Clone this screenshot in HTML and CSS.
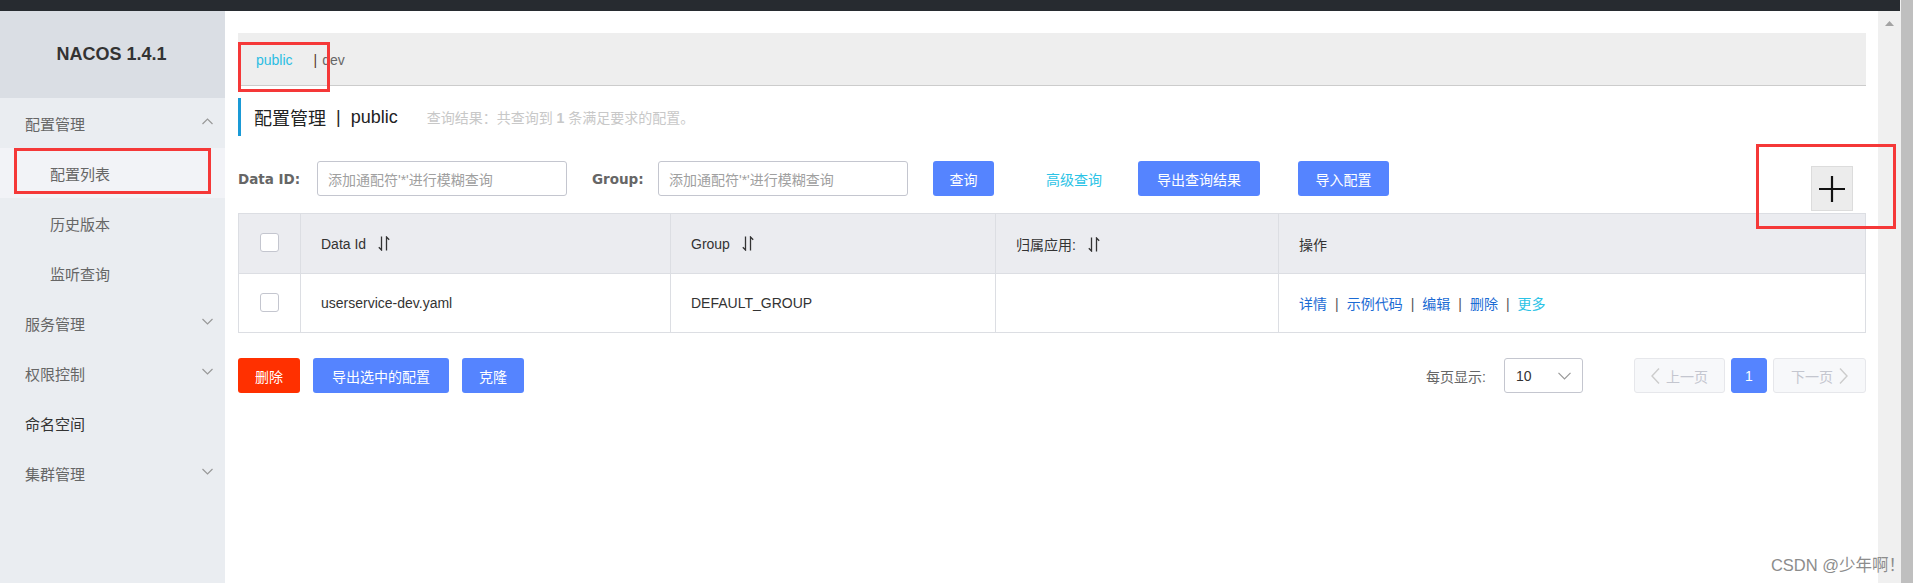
FILE: index.html
```html
<!DOCTYPE html>
<html lang="zh-CN">
<head>
<meta charset="utf-8">
<title>Nacos 配置列表</title>
<link rel="stylesheet" href="styles.css">
</head>
<body>
<div class="screen">
  <div class="window">
    <div class="topbar"></div>
    <div class="app">
      <aside class="sidebar">
        <div class="logo">NACOS 1.4.1</div>
        <nav class="menu">
          <div class="menu-item">
            <span>配置管理</span>
            <svg class="chev" width="11" height="7" viewBox="0 0 11 7"><polyline points="0.5,6 5.5,1 10.5,6" fill="none" stroke="#999" stroke-width="1.2"/></svg>
          </div>
          <div class="sub-item active">配置列表</div>
          <div class="sub-item">历史版本</div>
          <div class="sub-item">监听查询</div>
          <div class="menu-item">
            <span>服务管理</span>
            <svg class="chev" width="11" height="7" viewBox="0 0 11 7"><polyline points="0.5,1 5.5,6 10.5,1" fill="none" stroke="#999" stroke-width="1.2"/></svg>
          </div>
          <div class="menu-item">
            <span>权限控制</span>
            <svg class="chev" width="11" height="7" viewBox="0 0 11 7"><polyline points="0.5,1 5.5,6 10.5,1" fill="none" stroke="#999" stroke-width="1.2"/></svg>
          </div>
          <div class="menu-item leaf"><span>命名空间</span></div>
          <div class="menu-item">
            <span>集群管理</span>
            <svg class="chev" width="11" height="7" viewBox="0 0 11 7"><polyline points="0.5,1 5.5,6 10.5,1" fill="none" stroke="#999" stroke-width="1.2"/></svg>
          </div>
        </nav>
      </aside>

      <main class="content">
        <div class="ns-bar">
          <span class="ns-active">public</span><span class="ns-sep">|</span><span class="ns-item">dev</span>
        </div>

        <div class="page-title">
          <span class="title-main">配置管理</span><span class="title-sep">|</span><span class="title-ns">public</span>
          <span class="title-desc">查询结果：共查询到 <b>1</b> 条满足要求的配置。</span>
        </div>

        <div class="search-row">
          <label class="field-label">Data ID:</label>
          <div class="input">添加通配符'*'进行模糊查询</div>
          <label class="field-label group-label">Group:</label>
          <div class="input">添加通配符'*'进行模糊查询</div>
          <button class="btn btn-primary btn-query">查询</button>
          <button class="btn btn-text">高级查询</button>
          <button class="btn btn-primary btn-export">导出查询结果</button>
          <button class="btn btn-primary btn-import">导入配置</button>
          <button class="btn-add" aria-label="新建配置">
            <svg width="26" height="26" viewBox="0 0 26 26"><path d="M13 0 V26 M0 13 H26" stroke="#111" stroke-width="2.2" fill="none"/></svg>
          </button>
        </div>

        <table class="grid">
          <colgroup>
            <col class="c-check"><col class="c-id"><col class="c-group"><col class="c-app"><col class="c-op">
          </colgroup>
          <thead>
            <tr>
              <th class="cell-check"><span class="checkbox"></span></th>
              <th>Data Id <svg class="sort" width="12" height="15" viewBox="0 0 12 15"><path d="M3.5 0.5 V14 L0.8 11.2 M8.5 14.5 V1 L11.2 3.8" fill="none" stroke="#333" stroke-width="1.3"/></svg></th>
              <th>Group <svg class="sort" width="12" height="15" viewBox="0 0 12 15"><path d="M3.5 0.5 V14 L0.8 11.2 M8.5 14.5 V1 L11.2 3.8" fill="none" stroke="#333" stroke-width="1.3"/></svg></th>
              <th>归属应用: <svg class="sort" width="12" height="15" viewBox="0 0 12 15"><path d="M3.5 0.5 V14 L0.8 11.2 M8.5 14.5 V1 L11.2 3.8" fill="none" stroke="#333" stroke-width="1.3"/></svg></th>
              <th>操作</th>
            </tr>
          </thead>
          <tbody>
            <tr>
              <td class="cell-check"><span class="checkbox"></span></td>
              <td>userservice-dev.yaml</td>
              <td>DEFAULT_GROUP</td>
              <td></td>
              <td class="ops"><a>详情</a><span class="op-sep">|</span><a>示例代码</a><span class="op-sep">|</span><a>编辑</a><span class="op-sep">|</span><a>删除</a><span class="op-sep">|</span><a class="more">更多</a></td>
            </tr>
          </tbody>
        </table>

        <div class="footer-row">
          <div class="batch">
            <button class="btn btn-danger">删除</button>
            <button class="btn btn-primary btn-export-sel">导出选中的配置</button>
            <button class="btn btn-primary">克隆</button>
          </div>
          <div class="pager">
            <span class="page-size-label">每页显示:</span>
            <div class="select">
              <span>10</span>
              <svg width="13" height="8" viewBox="0 0 13 8"><polyline points="0.5,0.8 6.5,7 12.5,0.8" fill="none" stroke="#999" stroke-width="1.2"/></svg>
            </div>
            <div class="pages">
              <button class="pg pg-prev">
                <svg width="9" height="16" viewBox="0 0 9 16"><polyline points="8,0.5 1,8 8,15.5" fill="none" stroke="#ccc" stroke-width="1.4"/></svg>
                <span>上一页</span>
              </button>
              <button class="pg pg-current">1</button>
              <button class="pg pg-next">
                <span>下一页</span>
                <svg width="9" height="16" viewBox="0 0 9 16"><polyline points="1,0.5 8,8 1,15.5" fill="none" stroke="#ccc" stroke-width="1.4"/></svg>
              </button>
            </div>
          </div>
        </div>
      </main>

      <div class="vscroll">
        <svg class="vscroll-up" width="9" height="5" viewBox="0 0 9 5"><polygon points="4.5,0 9,5 0,5" fill="#a3a3a3"/></svg>
      </div>
    </div>
  </div>
  <div class="outer-scroll"></div>

  <div class="mark mark-ns"></div>
  <div class="mark mark-menu"></div>
  <div class="mark mark-add"></div>
  <div class="watermark">CSDN @少年啊！</div>
</div>
</body>
</html>
```

FILE: styles.css
```css
* { box-sizing: border-box; }

html, body {
  margin: 0;
  padding: 0;
  height: 583px;
  overflow: hidden;
  background: #fff;
}

body {
  font-family: "Liberation Sans", "Noto Sans CJK SC", sans-serif;
  font-size: 14px;
  color: #333;
}

.screen {
  position: relative;
  display: flex;
  width: 1913px;
  height: 583px;
}

.window {
  width: 1900px;
  height: 583px;
  display: flex;
  flex-direction: column;
}

.topbar {
  height: 11px;
  background: #272b30;
  flex: none;
}

.app {
  flex: 1;
  display: flex;
  min-height: 0;
}

.outer-scroll {
  width: 13px;
  height: 583px;
  background: #bfbfbf;
  border-left: 1px solid #f0f0f0;
}

/* Sidebar */
.sidebar {
  width: 225px;
  flex: none;
  background: #eaedf1;
  display: flex;
  flex-direction: column;
}

.logo {
  height: 87px;
  background: #dadee4;
  display: flex;
  align-items: center;
  justify-content: center;
  font-family: "Liberation Sans", sans-serif;
  font-weight: bold;
  font-size: 18px;
  color: #333;
  padding-right: 2px;
}

.menu {
  padding-top: 0;
}

.menu-item {
  height: 50px;
  display: flex;
  align-items: center;
  justify-content: space-between;
  padding: 0 12px 0 25px;
  font-size: 15px;
  color: #666;
}

.menu-item .chev {
  margin-top: -3px;
}

.menu-item.leaf {
  color: #333;
}

.sub-item {
  height: 50px;
  display: flex;
  align-items: center;
  padding-left: 50px;
  font-size: 15px;
  color: #666;
}

.sub-item.active {
  background: #f2f3f7;
}

/* Content */
.content {
  flex: 1;
  min-width: 0;
  padding: 22px 12px 0 13px;
  display: flex;
  flex-direction: column;
}

.ns-bar {
  height: 53px;
  background: #eeeeee;
  border-bottom: 1px solid #cccccc;
  display: flex;
  align-items: center;
  padding-left: 18px;
  padding-top: 1px;
}

.ns-active {
  color: #2bbde3;
  margin-right: 21px;
}

.ns-sep {
  color: #5a3a2a;
  margin-right: 5px;
}

.ns-item {
  color: #666;
}

.page-title {
  margin-top: 12px;
  height: 38px;
  border-left: 3px solid #1a9ad6;
  padding-left: 13px;
  display: flex;
  align-items: center;
}

.title-main,
.title-ns {
  font-size: 18px;
  color: #222;
}

.title-sep {
  font-size: 18px;
  color: #222;
  margin: 0 10px;
}

.title-desc {
  margin-left: 29px;
  color: #c8c8c8;
  font-size: 14px;
}

.title-desc b {
  font-weight: bold;
}

/* Search row */
.search-row {
  margin-top: 25px;
  display: flex;
  align-items: flex-start;
}

.field-label {
  height: 35px;
  display: flex;
  align-items: center;
  font-family: "DejaVu Sans", sans-serif;
  font-weight: bold;
  font-size: 13.5px;
  color: #666;
  width: 79px;
}

.group-label {
  margin-left: 25px;
  width: 66px;
}

.input {
  width: 250px;
  height: 35px;
  border: 1px solid #c4c6cf;
  border-radius: 3px;
  display: flex;
  align-items: center;
  padding-left: 10px;
  color: #a0a0a0;
  font-size: 14px;
  background: #fff;
}

.btn {
  height: 35px;
  border: none;
  border-radius: 3px;
  padding: 0 17px;
  font-family: "Liberation Sans", "Noto Sans CJK SC", sans-serif;
  font-size: 14px;
  color: #fff;
  cursor: pointer;
}

.btn-primary {
  background: #5584ff;
}

.btn-danger {
  background: #ff3000;
}

.btn-query {
  margin-left: 25px;
  width: 61px;
  padding: 0;
}

.btn-text {
  background: transparent;
  color: #2bc3e6;
  margin-left: 37px;
  padding: 0 15px;
}

.btn-export {
  margin-left: 21px;
  width: 122px;
  padding: 0;
}

.btn-import {
  margin-left: 38px;
  width: 91px;
  padding: 0;
}

.btn-add {
  margin-left: auto;
  margin-right: 13px;
  margin-top: 5px;
  width: 42px;
  height: 45px;
  background: #ececec;
  border: 1px solid #dcdcdc;
  padding: 0;
  display: flex;
  align-items: center;
  justify-content: center;
}

/* Table */
.grid {
  margin-top: 2px;
  width: 100%;
  border-collapse: collapse;
  table-layout: fixed;
  border: 1px solid #dcdee3;
}

.c-check { width: 62px; }
.c-id { width: 370px; }
.c-group { width: 325px; }
.c-app { width: 283px; }

.grid th,
.grid td {
  border: 1px solid #dcdee3;
  text-align: left;
  padding: 0 0 0 20px;
  font-weight: normal;
  color: #333;
  font-size: 14px;
}

.grid thead tr {
  height: 60px;
  background: #ebecf0;
}

.grid tbody tr {
  height: 59px;
}

.grid td.cell-check,
.grid th.cell-check {
  padding: 0;
  text-align: center;
}

.checkbox {
  display: inline-block;
  width: 19px;
  height: 19px;
  border: 1px solid #c4c6cf;
  border-radius: 3px;
  background: #fff;
  vertical-align: middle;
  margin-top: -3px;
}

.sort {
  vertical-align: middle;
  margin-left: 8px;
  margin-top: -3px;
}

.ops a {
  color: #1b6bd4;
}

.ops a.more {
  color: #2bc3e6;
}

.op-sep {
  color: #555;
  margin: 0 8px;
}

/* Footer */
.footer-row {
  margin-top: 25px;
  display: flex;
  justify-content: space-between;
  align-items: center;
}

.batch {
  display: flex;
  gap: 13px;
}

.btn-export-sel {
  padding: 0 19px;
}

.pager {
  display: flex;
  align-items: center;
}

.page-size-label {
  color: #666;
  margin-right: 18px;
}

.select {
  width: 79px;
  height: 35px;
  border: 1px solid #c4c6cf;
  border-radius: 3px;
  display: flex;
  align-items: center;
  justify-content: space-between;
  padding: 0 11px 0 11px;
  color: #333;
}

.pages {
  margin-left: 51px;
  display: flex;
  gap: 6px;
}

.pg {
  height: 35px;
  border-radius: 3px;
  border: 1px solid #e6e7eb;
  background: #f7f8fa;
  color: #c4c6cf;
  font-family: "Liberation Sans", "Noto Sans CJK SC", sans-serif;
  font-size: 14px;
  display: flex;
  align-items: center;
  justify-content: center;
  gap: 6px;
  padding: 0;
}

.pg-prev { width: 91px; }
.pg-next { width: 93px; }

.pg-current {
  width: 36px;
  background: #5584ff;
  border-color: #5584ff;
  color: #fff;
}

/* Scroll track */
.vscroll {
  width: 22px;
  flex: none;
  background: #f0f0f0;
  display: flex;
  justify-content: center;
  padding-top: 10px;
}

/* Annotation overlays */
.mark {
  position: absolute;
  border: 3px solid #f53838;
}

.mark-ns {
  left: 238px;
  top: 42px;
  width: 92px;
  height: 50px;
}

.mark-menu {
  left: 14px;
  top: 148px;
  width: 197px;
  height: 46px;
}

.mark-add {
  left: 1756px;
  top: 144px;
  width: 140px;
  height: 85px;
}

.watermark {
  position: absolute;
  right: 8px;
  top: 552px;
  font-size: 16.5px;
  color: #8c8c8c;
  white-space: nowrap;
}
```
